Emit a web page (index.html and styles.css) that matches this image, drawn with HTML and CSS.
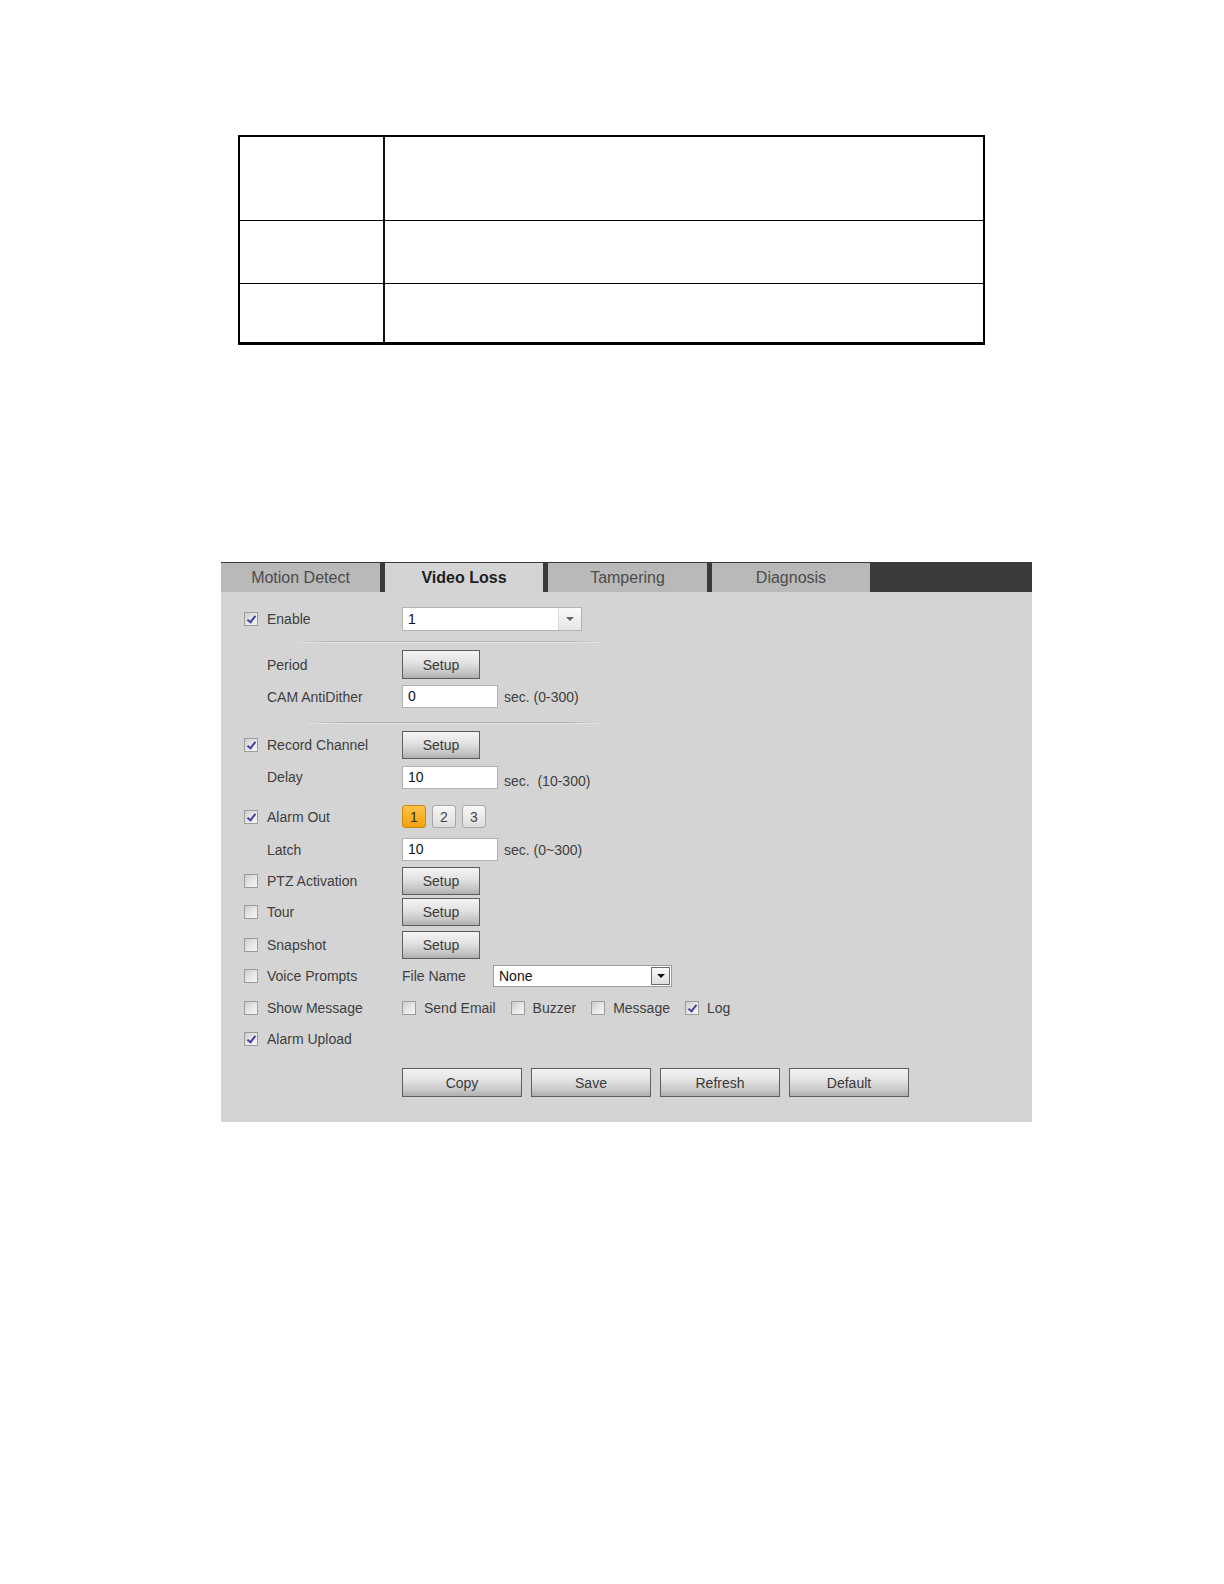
FILE: index.html
```html
<!DOCTYPE html>
<html>
<head>
<meta charset="utf-8">
<title>Video Loss</title>
<link rel="stylesheet" href="styles.css">
</head>
<body>
<div class="page">
  <table class="doc-table">
    <tr class="r1"><td class="c1"></td><td></td></tr>
    <tr class="r2"><td class="c1"></td><td></td></tr>
    <tr class="r3"><td class="c1"></td><td></td></tr>
  </table>

  <div class="panel">
    <div class="tabbar">
      <div class="tab">Motion Detect</div>
      <div class="tab active">Video Loss</div>
      <div class="tab">Tampering</div>
      <div class="tab">Diagnosis</div>
    </div>
    <div class="body">
      <div class="row h24 mt15">
        <span class="cb on"></span><span class="lbl">Enable</span>
        <div class="select sel-enable"><span class="sel-val">1</span><span class="arrow light"><i class="tri"></i></span></div>
      </div>
      <div class="sep sep1"></div>
      <div class="row h29 mt7">
        <span class="cb none"></span><span class="lbl">Period</span>
        <button class="btn setup">Setup</button>
      </div>
      <div class="row h23 mt6">
        <span class="cb none"></span><span class="lbl">CAM AntiDither</span>
        <div class="input">0</div><span class="hint">sec. (0-300)</span>
      </div>
      <div class="sep sep2"></div>
      <div class="row h28 mt7">
        <span class="cb on"></span><span class="lbl">Record Channel</span>
        <button class="btn setup">Setup</button>
      </div>
      <div class="row h24 mt6">
        <span class="cb none"></span><span class="lbl">Delay</span>
        <div class="input">10</div><span class="hint low">sec.&nbsp; (10-300)</span>
      </div>
      <div class="row h23 mt16">
        <span class="cb on"></span><span class="lbl">Alarm Out</span>
        <div class="chans">
          <span class="chan sel">1</span><span class="chan">2</span><span class="chan">3</span>
        </div>
      </div>
      <div class="row h23 mt10">
        <span class="cb none"></span><span class="lbl">Latch</span>
        <div class="input">10</div><span class="hint">sec. (0~300)</span>
      </div>
      <div class="row h28 mt6">
        <span class="cb"></span><span class="lbl">PTZ Activation</span>
        <button class="btn setup">Setup</button>
      </div>
      <div class="row h28 mt3">
        <span class="cb"></span><span class="lbl">Tour</span>
        <button class="btn setup">Setup</button>
      </div>
      <div class="row h28 mt5">
        <span class="cb"></span><span class="lbl">Snapshot</span>
        <button class="btn setup">Setup</button>
      </div>
      <div class="row h22 mt6">
        <span class="cb"></span><span class="lbl">Voice Prompts</span>
        <span class="fname">File Name</span>
        <div class="select sel-file"><span class="sel-val">None</span><span class="arrow boxed"><i class="tri dark"></i></span></div>
      </div>
      <div class="row h24 mt9">
        <span class="cb"></span><span class="lbl">Show Message</span>
        <div class="opts">
          <span class="opt"><span class="cb sm"></span>Send Email</span>
          <span class="opt"><span class="cb sm"></span>Buzzer</span>
          <span class="opt"><span class="cb sm"></span>Message</span>
          <span class="opt"><span class="cb sm on"></span>Log</span>
        </div>
      </div>
      <div class="row h24 mt7">
        <span class="cb on"></span><span class="lbl">Alarm Upload</span>
      </div>
      <div class="actions">
        <button class="btn big">Copy</button>
        <button class="btn big">Save</button>
        <button class="btn big">Refresh</button>
        <button class="btn big">Default</button>
      </div>
    </div>
  </div>
</div>
</body>
</html>
```
FILE: styles.css
```css
html, body {
  margin: 0;
  padding: 0;
  background: #ffffff;
}
.page {
  width: 1224px;
  height: 1584px;
  padding-top: 135px;
  box-sizing: border-box;
  font-family: "Liberation Sans", Arial, sans-serif;
}

/* document table */
.doc-table {
  margin-left: 238px;
  width: 747px;
  border-collapse: collapse;
  border-top: 2px solid #000;
  border-bottom: 3px solid #000;
  border-left: 2px solid #000;
  border-right: 2px solid #000;
}
.doc-table td {
  border: 1px solid #000;
  padding: 0;
}
.doc-table td.c1 {
  width: 143px;
  border-right: 2px solid #111;
}
.doc-table .r1 td { height: 83px; }
.doc-table .r2 td { height: 62px; }
.doc-table .r3 td { height: 58px; }

/* panel */
.panel {
  margin-top: 217px;
  margin-left: 221px;
  width: 811px;
  background: #d4d4d4;
  color: #3e3e3e;
  font-size: 14px;
}
.tabbar {
  display: flex;
  height: 30px;
  background: #3a3a3a;
  padding-top: 1px;
  box-sizing: border-box;
}
.tab {
  width: 159px;
  height: 29px;
  background: #b9b9b9;
  color: #4c4c4c;
  font-size: 16px;
  line-height: 29px;
  text-align: center;
  margin-right: 5px;
}
.tab:last-child { margin-right: 0; width: 158px; }
.tab.active {
  width: 158px;
  background: #d4d4d4;
  color: #1e1e1e;
  font-weight: bold;
}

.body {
  padding: 0 0 25px 23px;
}
.row {
  display: flex;
  align-items: center;
}
.h22 { height: 22px; }
.h23 { height: 23px; }
.h24 { height: 24px; }
.h28 { height: 28px; }
.h29 { height: 29px; }
.mt3 { margin-top: 3px; }
.mt5 { margin-top: 5px; }
.mt6 { margin-top: 6px; }
.mt7 { margin-top: 7px; }
.mt9 { margin-top: 9px; }
.mt10 { margin-top: 10px; }
.mt15 { margin-top: 15px; }
.mt16 { margin-top: 16px; }

/* checkbox */
.cb {
  position: relative;
  width: 14px;
  height: 14px;
  box-sizing: border-box;
  border: 1px solid #9c9c9c;
  background: linear-gradient(135deg, #cdcdcd 0%, #e8e8e8 55%, #f6f6f6 100%);
  margin-right: 9px;
  flex: none;
}
.cb.sm { margin-right: 8px; }
.cb.none {
  border: none;
  background: none;
}
.cb.on::after {
  content: "";
  position: absolute;
  left: 4px;
  top: 1px;
  width: 3px;
  height: 7px;
  border-right: 2px solid #4040a8;
  border-bottom: 2px solid #4040a8;
  transform: rotate(38deg);
}
.lbl {
  width: 135px;
  flex: none;
}

/* buttons */
.btn {
  font-family: "Liberation Sans", Arial, sans-serif;
  font-size: 14px;
  color: #3a3a3a;
  border: 1px solid #5e5e5e;
  background: linear-gradient(#f4f4f4 0%, #e4e4e4 40%, #c6c6c6 80%, #aeaeae 100%);
  padding: 0;
  margin: 0;
}
.btn.setup {
  width: 78px;
  height: 100%;
}
.btn.big {
  width: 120px;
  height: 29px;
}

/* input */
.input {
  width: 96px;
  height: 23px;
  box-sizing: border-box;
  background: #fff;
  border: 1px solid #b0b0b0;
  padding-left: 5px;
  line-height: 21px;
  color: #111;
  flex: none;
}
.hint {
  margin-left: 6px;
}
.hint.low {
  padding-top: 8px;
}

/* selects */
.select {
  position: relative;
  height: 24px;
  box-sizing: border-box;
  background: #fff;
  border: 1px solid #b4b4b4;
  display: flex;
  align-items: center;
  flex: none;
  color: #111;
}
.sel-val { padding-left: 5px; flex: 1; }
.sel-enable { width: 180px; }
.sel-file { width: 179px; height: 22px; border-color: #9c9c9c; }
.arrow {
  height: 100%;
  display: flex;
  align-items: center;
  justify-content: center;
  box-sizing: border-box;
}
.arrow.light {
  width: 23px;
  border-left: 1px solid #d8d8d8;
  background: linear-gradient(#fafafa, #e6e6e6);
}
.arrow.boxed {
  width: 19px;
  height: 18px;
  margin-right: 1px;
  border: 1px solid #6c6c6c;
  background: linear-gradient(#fbfbfb, #dedede);
}
.tri {
  width: 0;
  height: 0;
  border-left: 4px solid transparent;
  border-right: 4px solid transparent;
  border-top: 4px solid #666;
}
.tri.dark { border-top-color: #111; }

.fname {
  width: 91px;
  flex: none;
}

/* alarm out channels */
.chans {
  display: flex;
  gap: 6px;
}
.chan {
  width: 24px;
  height: 23px;
  box-sizing: border-box;
  border: 1px solid #a8a8a8;
  border-radius: 3px;
  background: linear-gradient(#f8f8f8, #dcdcdc);
  display: flex;
  align-items: center;
  justify-content: center;
  color: #444;
}
.chan.sel {
  border-color: #c98a10;
  background: linear-gradient(#fcc24a, #f4a20e);
  color: #3a2a00;
}

/* show message options */
.opts {
  display: flex;
  align-items: center;
}
.opt {
  display: flex;
  align-items: center;
  margin-right: 15px;
}

/* separators */
.sep {
  height: 2px;
  background: linear-gradient(90deg, rgba(176,176,176,0) 0%, #b2b2b2 12%, #b2b2b2 88%, rgba(176,176,176,0) 100%);
  border-bottom: 1px solid #e2e2e2;
  box-sizing: border-box;
}
.sep1 {
  width: 303px;
  margin-left: 54px;
  margin-top: 10px;
}
.sep2 {
  width: 293px;
  margin-left: 64px;
  margin-top: 14px;
}

.actions {
  display: flex;
  gap: 9px;
  margin-top: 17px;
  margin-left: 158px;
}
```
